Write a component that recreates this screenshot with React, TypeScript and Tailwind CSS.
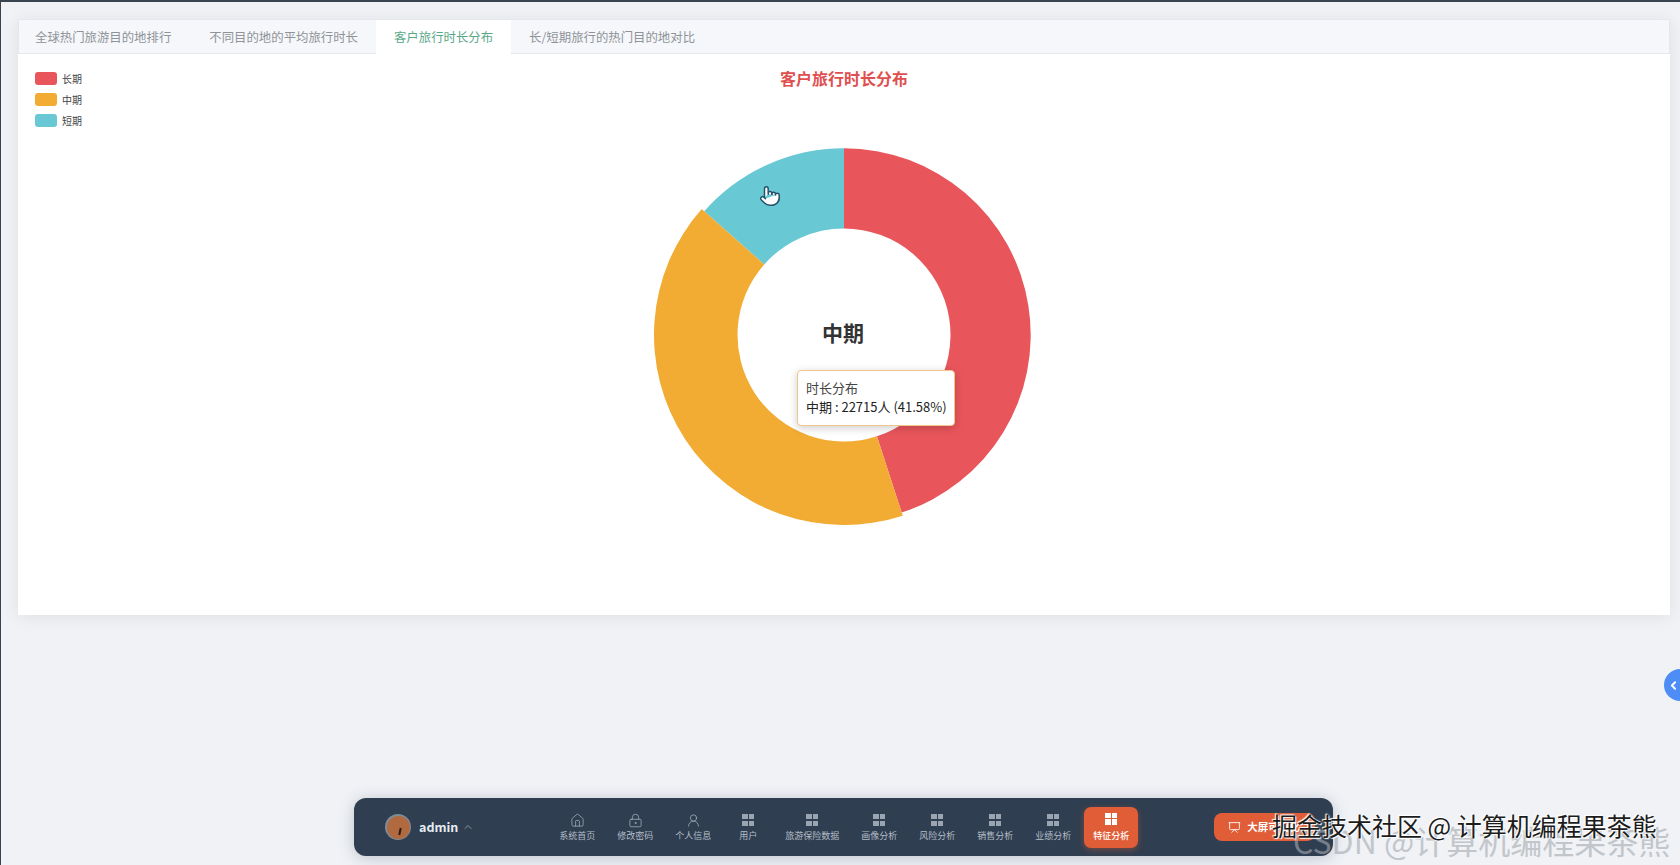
import { ChevronUp, ChevronLeft, House, LockKeyhole, UserRound, Pointer, Presentation } from "lucide-react";

const font = { fontFamily: '"Noto Sans CJK SC", "Noto Sans", sans-serif' };

const cx = 210, cy = 210;
function polar(r: number, deg: number) {
  const a = ((deg - 90) * Math.PI) / 180;
  return [cx + r * Math.cos(a), cy + r * Math.sin(a)];
}
function slice(r0: number, r1: number, a0: number, a1: number) {
  const [x0, y0] = polar(r1, a0);
  const [x1, y1] = polar(r1, a1);
  const [x2, y2] = polar(r0, a1);
  const [x3, y3] = polar(r0, a0);
  const large = a1 - a0 > 180 ? 1 : 0;
  return `M${x0} ${y0}A${r1} ${r1} 0 ${large} 1 ${x1} ${y1}L${x2} ${y2}A${r0} ${r0} 0 ${large} 0 ${x3} ${y3}Z`;
}

function Grid({ active }: { active?: boolean }) {
  const c = active ? "bg-white" : "bg-[#9aa5b1]";
  return (
    <span className="grid h-[12px] w-[12px] grid-cols-2 gap-[1.5px]">
      <span className={c} />
      <span className={c} />
      <span className={c} />
      <span className={c} />
    </span>
  );
}

function NavItem({ label, icon, wide }: { label: string; icon: React.ReactNode; wide?: string }) {
  return (
    <div className={`flex h-[41px] flex-col items-center justify-center ${wide ?? "w-[54px]"}`}>
      <span className="flex h-[16px] items-center justify-center text-[#a8b2bd]">{icon}</span>
      <span className="mt-[2px] text-[9px] leading-[12px] text-[#b4bdc7]">{label}</span>
    </div>
  );
}

export default function App() {
  const tabs = ["全球热门旅游目的地排行", "不同目的地的平均旅行时长", "客户旅行时长分布", "长/短期旅行的热门目的地对比"];
  return (
    <div style={font} className="relative flex h-[865px] w-[1680px] flex-col overflow-hidden border-l border-t-2 border-l-[#3a4350] border-t-[#3a4350] bg-[#f0f2f6]">
      <section className="ml-[17px] mr-[10px] mt-[17px] h-[596px] bg-white shadow-[0_2px_16px_rgba(0,0,0,0.08)]">
        <div className="flex h-[35px] border border-[#e4e7ed] bg-[#f5f7fa]">
          {tabs.map((t, i) => (
            <div
              key={t}
              className={`flex h-[35px] items-center text-[12.4px] ${i === 0 ? "pl-[16px] pr-[20px]" : "px-[18px]"} ${
                i === 2 ? "bg-white text-[#5aa888]" : "text-[#8f9399]"
              }`}
            >
              {t}
            </div>
          ))}
        </div>
        <div className="relative h-[561px]">
          <div className="absolute left-[17px] top-[17px] flex flex-col gap-[7.4px]">
            {[
              ["长期", "bg-[#e8565c]"],
              ["中期", "bg-[#f2ab33]"],
              ["短期", "bg-[#68c9d5]"],
            ].map(([l, c]) => (
              <div key={l} className="flex h-[14px] items-center gap-[5px]">
                <span className={`h-[13px] w-[22px] rounded-[3px] ${c}`} />
                <span className="text-[10px] text-[#444]">{l}</span>
              </div>
            ))}
          </div>
          <h2 className="pt-[13px] text-center text-[16px] font-bold leading-[22px] text-[#e04f4f]">客户旅行时长分布</h2>
          <svg className="absolute left-[616px] top-[71px]" width="420" height="420" viewBox="0 0 420 420">
            <path d={slice(106.5, 186.7, 0, 162)} fill="#e8565c" />
            <path d={slice(106.5, 186.7, 311.5, 360)} fill="#68c9d5" />
            <path d={slice(106.5, 190, 162, 311.5)} fill="#f2ab33" />
          </svg>
          <div className="absolute left-[804px] top-[263px] text-[21px] font-bold leading-[30px] text-[#333]">中期</div>
          <div className="absolute left-[779px] top-[316px] h-[56px] w-[158px] rounded-[4px] border border-[#f0c88a] bg-white py-[7px] pl-[8px] text-[13px] leading-[19px] text-[#222] shadow-[0_2px_8px_rgba(0,0,0,0.2)]">
            <div className="text-[#444]">时长分布</div>
            <div className="whitespace-nowrap">中期 : 22715人 (41.58%)</div>
          </div>
          <Pointer className="absolute left-[741px] top-[131px]" size={22} fill="#fff" stroke="#24506a" strokeWidth={1.6} />
        </div>
      </section>

      <nav className="mb-[9px] ml-[353px] mt-auto flex h-[58px] w-[979px] items-center rounded-[12px] bg-[#2f3e50] pl-[31px] shadow-[0_2px_16px_rgba(47,62,80,0.25)]">
        <div className="flex h-[26px] w-[26px] items-center justify-center rounded-full bg-[#7f8b95]">
          <div className="relative h-[23px] w-[23px] rounded-full bg-[#b16a3f]">
            <span className="absolute left-[12px] top-[12px] h-[7px] w-[2px] rotate-12 bg-[#2c1a12]" />
          </div>
        </div>
        <span className="ml-[8px] text-[12.5px] font-bold text-[#e6edf3]">admin</span>
        <ChevronUp className="ml-[4px] text-[#8894a0]" size={12} />
        <div className="ml-[76px] flex items-center gap-[4px]">
          <NavItem label="系统首页" icon={<House size={15} strokeWidth={1.2} />} />
          <NavItem label="修改密码" icon={<LockKeyhole size={15} strokeWidth={1.2} />} />
          <NavItem label="个人信息" icon={<UserRound size={15} strokeWidth={1.2} />} />
          <NavItem label="用户" wide="w-[48px]" icon={<Grid />} />
          <NavItem label="旅游保险数据" wide="w-[72px]" icon={<Grid />} />
          <NavItem label="画像分析" icon={<Grid />} />
          <NavItem label="风险分析" icon={<Grid />} />
          <NavItem label="销售分析" icon={<Grid />} />
          <NavItem label="业绩分析" icon={<Grid />} />
          <div className="flex h-[41px] w-[54px] flex-col items-center justify-center rounded-[7px] bg-[#e05d38] shadow-[0_2px_6px_rgba(224,93,56,0.4)]">
            <Grid active />
            <span className="mt-[5px] text-[9px] font-medium leading-[12px] text-white">特征分析</span>
          </div>
        </div>
        <button className="ml-[76px] flex h-[28px] w-[101px] items-center gap-[6px] rounded-[8px] bg-[#e05d38] pl-[14px] text-[10.5px] font-bold text-white">
          <Presentation size={13} strokeWidth={1.6} />
          大屏可视化
        </button>
      </nav>

      <div className="absolute left-[1663px] top-[667px] flex h-[32px] w-[32px] items-center rounded-full bg-[#4d8df5] pl-[3px] text-white">
        <ChevronLeft size={13} strokeWidth={3.5} />
      </div>
      <div className="pointer-events-none absolute left-[1292px] top-[820px] whitespace-nowrap text-[32px] leading-[36px] text-[#a4a9b0] opacity-60">CSDN @计算机编程果茶熊</div>
      <div className="pointer-events-none absolute left-[1271px] top-[807px] whitespace-nowrap text-[25px] leading-[32px] text-[#1c1c1c] [text-shadow:0_0_2px_#fff,1px_1px_1px_#fff,-1px_-1px_1px_#fff]">
        掘金技术社区 @ 计算机编程果茶熊
      </div>
    </div>
  );
}
